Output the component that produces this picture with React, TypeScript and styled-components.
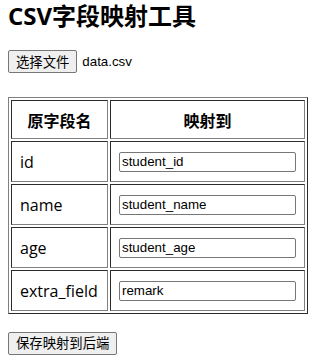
import React from 'react'
import styled, { createGlobalStyle } from 'styled-components'

const fields: { source: string; target: string }[] = [
	{ source: 'id', target: 'student_id' },
	{ source: 'name', target: 'student_name' },
	{ source: 'age', target: 'student_age' },
	{ source: 'extra_field', target: 'remark' },
]

const GlobalStyle = createGlobalStyle`
	html, body {
		margin: 0;
		padding: 0;
		background: #fff;
	}
	body {
		color: #000;
		font-family: "Open Sans", "Noto Sans CJK SC", sans-serif;
	}
`

export default function App() {
	return (
		<>
			<GlobalStyle />
			<Page>
				<Title>CSV字段映射工具</Title>
				<FileRow>
					<NativeButton type="button">选择文件</NativeButton>
					<FileName>data.csv</FileName>
				</FileRow>
				<MappingTable>
					<thead>
						<tr>
							<HeadCell $first>
								<CellInner $head>原字段名</CellInner>
							</HeadCell>
							<HeadCell>
								<CellInner $head>映射到</CellInner>
							</HeadCell>
						</tr>
					</thead>
					<tbody>
						{fields.map(field => (
							<tr key={`field-${field.source}`}>
								<BodyCell $first>
									<CellInner>{field.source}</CellInner>
								</BodyCell>
								<BodyCell>
									<CellInner>
										<TextInput type="text" defaultValue={field.target} />
									</CellInner>
								</BodyCell>
							</tr>
						))}
					</tbody>
				</MappingTable>
				<NativeButton type="button">保存映射到后端</NativeButton>
			</Page>
		</>
	)
}

const Page = styled.div`
	padding: 0 8px;
`

const Title = styled.h1`
	margin: 0;
	font-size: 24px;
	line-height: 32px;
	font-weight: 700;
`

const FileRow = styled.div`
	display: flex;
	align-items: center;
	gap: 5px;
	margin-top: 18px;
`

const NativeButton = styled.button`
	height: 23px;
	padding: 0 7px;
	margin: 0;
	border: 1px solid #767676;
	border-radius: 2px;
	background: #efefef;
	color: #000;
	font-family: "Noto Sans CJK SC", sans-serif;
	font-size: 13.33px;
	line-height: 20px;
`

const FileName = styled.span`
	font-family: "Liberation Sans", Arial, sans-serif;
	font-size: 13.33px;
`

const MappingTable = styled.table`
	width: 300px;
	margin: 24px 0 17px;
	border: 1px outset grey;
	border-spacing: 2px;
	box-sizing: border-box;
`

const HeadCell = styled.th<{ $first?: boolean }>`
	border: 1px inset grey;
	padding: 8px;
	text-align: center;
	width: ${props => (props.$first ? '79px' : 'auto')};
`

const BodyCell = styled.td<{ $first?: boolean }>`
	border: 1px inset grey;
	padding: 8px;
	width: ${props => (props.$first ? '79px' : 'auto')};
	white-space: nowrap;
`

const CellInner = styled.div<{ $head?: boolean }>`
	display: flex;
	align-items: center;
	justify-content: ${props => (props.$head ? 'center' : 'flex-start')};
	height: ${props => (props.$head ? '21px' : '23px')};
	font-size: 16px;
	font-weight: ${props => (props.$head ? 700 : 400)};
`

const TextInput = styled.input`
	box-sizing: border-box;
	width: 100%;
	height: 20px;
	margin: 0;
	padding: 1px 2px;
	border: 1px solid #767676;
	border-radius: 2px;
	color: #000;
	background: #fff;
	font-family: "Liberation Sans", Arial, sans-serif;
	font-size: 13.33px;
`
